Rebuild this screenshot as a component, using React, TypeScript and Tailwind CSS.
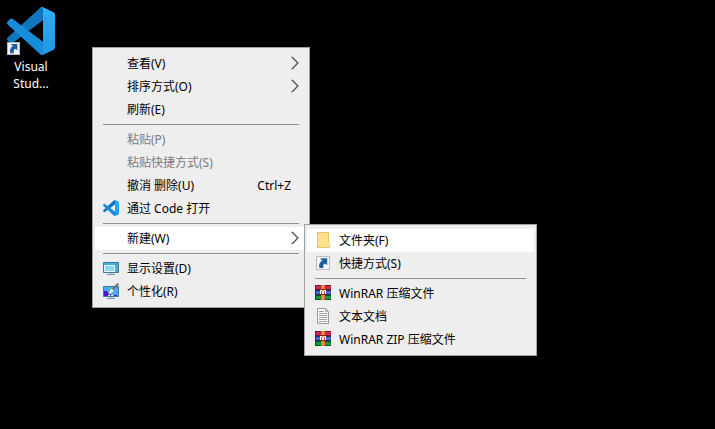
import type { ReactNode } from "react";

function CodeLogo({ className }: { className: string }) {
  return (
    <svg viewBox="0 0 100 100" className={className} aria-hidden="true">
      <defs>
        <linearGradient id="code-panel" x1="0" y1="0" x2="0" y2="1">
          <stop offset="0" stopColor="#2eb0f8" />
          <stop offset="1" stopColor="#1f96e6" />
        </linearGradient>
      </defs>
      <path
        fill="#1276bd"
        d="M96.4614 10.7962L75.8569 0.875542C73.4719 -0.272773 70.6217 0.211611 68.75 2.08333L1.29858 63.5832C-0.515693 65.2373 -0.513607 68.0937 1.30308 69.7452L6.81272 74.754C8.29793 76.1042 10.5347 76.2036 12.1338 74.9905L93.3609 13.3699C96.086 11.3026 100 13.2462 100 16.6667V16.4275C100 14.0265 98.6246 11.8378 96.4614 10.7962Z"
      />
      <path
        fill="#178cd8"
        d="M96.4614 89.2038L75.8569 99.1245C73.4719 100.273 70.6217 99.7884 68.75 97.9167L1.29858 36.4169C-0.515693 34.7627 -0.513607 31.9063 1.30308 30.2548L6.81272 25.246C8.29793 23.8958 10.5347 23.7964 12.1338 25.0095L93.3609 86.6301C96.086 88.6974 100 86.7538 100 83.3334V83.5726C100 85.9735 98.6246 88.1622 96.4614 89.2038Z"
      />
      <path
        fill="url(#code-panel)"
        d="M75.8578 99.1263C73.4721 100.274 70.6219 99.7885 68.75 97.9166C71.0564 100.223 75 98.5895 75 95.3278V4.67213C75 1.41039 71.0564 -0.223106 68.75 2.08329C70.6219 0.211402 73.4721 -0.273666 75.8578 0.873633L96.4587 10.7807C98.6234 11.8217 100 14.0112 100 16.4132V83.5871C100 85.9891 98.6234 88.1786 96.4586 89.2196L75.8578 99.1263Z"
      />
    </svg>
  );
}

function ShortcutIcon({ className }: { className: string }) {
  return (
    <svg viewBox="0 0 14 14" className={className} aria-hidden="true">
      <rect x="0.5" y="0.5" width="13" height="13" fill="#f5f6f7" stroke="#b9bcc0" />
      <path
        fill="#1f5fa8"
        d="M4.2 2.2H11.2V9.2L9.2 7.4C7.4 8.4 6.8 9.8 7.4 12H3.6C2.4 8.8 3.8 6 6.2 4.4Z"
      />
    </svg>
  );
}

function FolderIcon() {
  return (
    <svg viewBox="0 0 16 16" className="size-4" aria-hidden="true">
      <path fill="#eac766" d="M2 0h12v10.5l1 1V16H2z" />
      <path fill="#fde08a" d="M3 1h10v9.5h-1V15H3z" />
      <path fill="#fff0b8" d="M12.5 11h1.5v4h-1.5z" />
    </svg>
  );
}

function DocumentIcon() {
  return (
    <svg viewBox="0 0 16 16" className="size-4" aria-hidden="true">
      <path fill="#fbfbfb" stroke="#9a9a9a" d="M2.5 0.5h8l3 3v12h-11z" />
      <path fill="none" stroke="#a6a6a6" d="M10.5 0.5v3h3" />
      <path
        stroke="#a0a0a0"
        d="M4 3.5h5M4 5.5h8M4 7.5h8M4 9.5h8M4 11.5h8M4 13.5h8"
      />
    </svg>
  );
}

function ArchiveIcon() {
  return (
    <svg viewBox="0 0 16 16" className="size-4" aria-hidden="true">
      <path fill="#6e1830" d="M0 0h16v5H0z" />
      <path fill="#d3224f" d="M1 1h15v3H1z" />
      <path fill="#1d2c6e" d="M0 5h16v5H0z" />
      <path fill="#4567d6" d="M1 6h15v3H1z" />
      <path fill="#0b4f22" d="M0 10h16v5H0z" />
      <path fill="#109a3c" d="M1 11h15v3H1z" />
      <path fill="#e8702a" d="M6 0h4v15H6z" />
      <path fill="#f0913a" d="M7 0h2v15H7z" />
      <path fill="#7c2c1a" d="M5 4h6v1H5zM5 9h6v1H5z" />
      <path fill="#ffffff" d="M5 5h1v4H5zM10 5h1v4h-1zM6 5h1v1H6zM9 5h1v1H9z" />
      <path fill="#d8481f" d="M6 6h4v3H6z" />
      <path fill="#ffffff" d="M7 6h2v3H7z" />
    </svg>
  );
}

function DisplayIcon() {
  return (
    <svg viewBox="0 0 16 16" className="size-4" aria-hidden="true">
      <path fill="#3fb0ea" stroke="#4a7590" d="M0.5 2.5h15v10h-15z" />
      <path fill="#8bd7f9" stroke="#e8f8ff" d="M1.5 5.5h10v6h-10z" />
      <path fill="#b9c6cd" d="M6 13h4v1H6z" />
      <path fill="#8c979e" d="M4 14h8v1H4z" />
    </svg>
  );
}

function PersonalizeIcon() {
  return (
    <svg viewBox="0 0 16 16" className="size-4" aria-hidden="true">
      <path fill="#3fb0ea" stroke="#4a7590" d="M0.5 3.5h15v10h-15z" />
      <path fill="#4a10d4" d="M1 8h3l2 3v2H1z" />
      <path fill="#ffffff" d="M5 12h2v1H5zM8 12h2v1H8z" />
      <path fill="#4a10d4" d="M7 12h1v1H7zM11 12h3v1h-3z" />
      <path stroke="#6a747c" strokeWidth="2" d="M15.4 0.6L9.5 6.5" />
      <path fill="#f3f5f6" stroke="#6d8796" strokeWidth="0.5" d="M8.6 5.6l2.2 2C10.2 10 8 10.8 4.8 10.4 6.8 9.2 6.6 6.4 8.6 5.6Z" />
      <path fill="#b9c6cd" d="M6 14h4v1H6z" />
      <path fill="#8c979e" d="M4 15h8v1H4z" />
    </svg>
  );
}

function SubmenuArrow() {
  return (
    <svg viewBox="0 0 8 14" className="mt-px h-3.5 w-2" fill="none" aria-hidden="true">
      <path stroke="#d88a68" d="M0.2 0.8L6.2 7L0.2 13.2" />
      <path stroke="#3d98e6" d="M1.5 0.8L7.5 7L1.5 13.2" />
      <path stroke="#3c1820" strokeWidth="0.8" d="M0.8 0.8L6.8 7L0.8 13.2" />
    </svg>
  );
}

type ItemProps = {
  label: string;
  icon?: ReactNode;
  shortcut?: string;
  submenu?: boolean;
  active?: boolean;
  disabled?: boolean;
};

function Item({ label, icon, shortcut, submenu, active, disabled }: ItemProps) {
  return (
    <button
      type="button"
      role="menuitem"
      disabled={disabled}
      aria-haspopup={submenu ? "menu" : undefined}
      aria-expanded={submenu ? active === true : undefined}
      className={`flex h-[23px] w-full items-start gap-2 pt-[3px] pr-2 pl-2 text-left leading-[17px] whitespace-nowrap disabled:text-[#7a7a7a] ${
        active ? "bg-white" : ""
      }`}
    >
      <span className="flex size-4 shrink-0 justify-center">{icon}</span>
      <span className="flex-1">{label}</span>
      {shortcut && <span className="pr-2">{shortcut}</span>}
      {submenu && <SubmenuArrow />}
    </button>
  );
}

function Separator() {
  return <hr className="mx-2 my-[3px] border-t border-[#919191]" />;
}

function Menu({ label, className, children }: { label: string; className: string; children: ReactNode }) {
  return (
    <div
      role="menu"
      aria-label={label}
      className={`absolute border border-[#a0a0a0] bg-[#eeeeee] px-0.5 py-1 text-black ${className}`}
    >
      {children}
    </div>
  );
}

export default function App() {
  return (
    <main className="relative min-h-screen overflow-hidden bg-black font-['Noto_Sans','Noto_Sans_CJK_SC',sans-serif] text-xs">
      <button
        type="button"
        className="absolute top-[7px] left-0 flex w-[62px] flex-col items-center gap-[3px] text-center leading-[17px] text-white"
      >
        <span className="relative">
          <CodeLogo className="size-12" />
          <ShortcutIcon className="absolute bottom-0 left-0 size-[13px]" />
        </span>
        <span>
          Visual
          <br />
          Stud...
        </span>
      </button>

      <Menu label="桌面" className="top-[47px] left-[92px] w-[218px]">
        <Item label="查看(V)" submenu />
        <Item label="排序方式(O)" submenu />
        <Item label="刷新(E)" />
        <Separator />
        <Item label="粘贴(P)" disabled />
        <Item label="粘贴快捷方式(S)" disabled />
        <Item label="撤消 删除(U)" shortcut="Ctrl+Z" />
        <Item label="通过 Code 打开" icon={<CodeLogo className="size-4" />} />
        <Separator />
        <Item label="新建(W)" submenu active />
        <Separator />
        <Item label="显示设置(D)" icon={<DisplayIcon />} />
        <Item label="个性化(R)" icon={<PersonalizeIcon />} />
      </Menu>

      <Menu label="新建" className="top-[224px] left-[304px] w-[233px]">
        <Item label="文件夹(F)" icon={<FolderIcon />} active />
        <Item label="快捷方式(S)" icon={<ShortcutIcon className="mt-px size-3.5" />} />
        <Separator />
        <Item label="WinRAR 压缩文件" icon={<ArchiveIcon />} />
        <Item label="文本文档" icon={<DocumentIcon />} />
        <Item label="WinRAR ZIP 压缩文件" icon={<ArchiveIcon />} />
      </Menu>
    </main>
  );
}
